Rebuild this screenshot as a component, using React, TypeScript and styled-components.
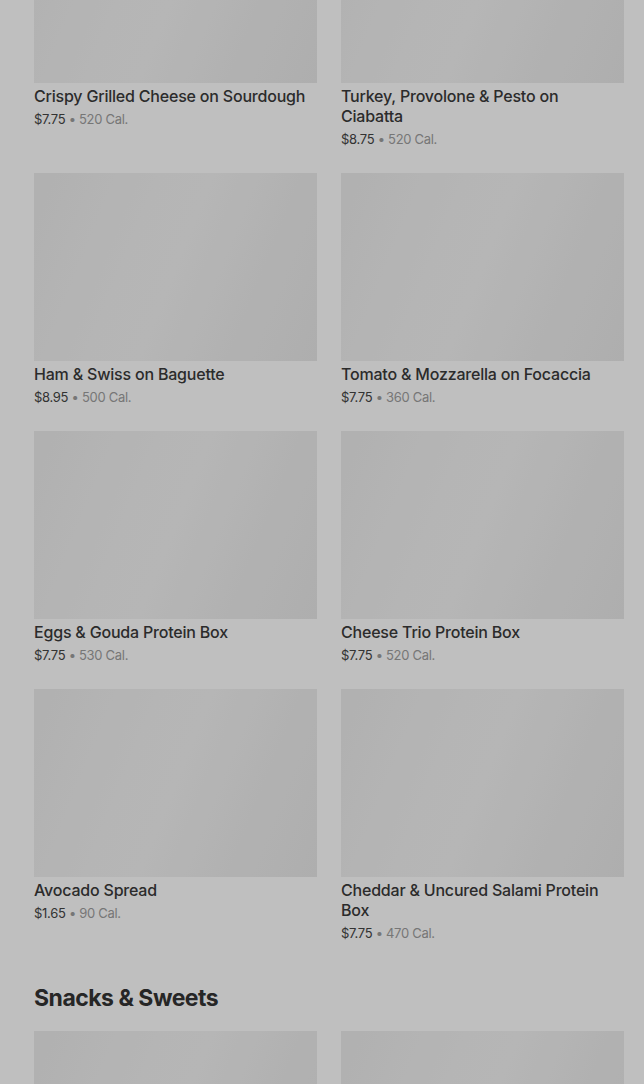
import React from 'react';
import styled, { createGlobalStyle } from 'styled-components';

const GlobalStyle = createGlobalStyle`
  html, body {
    margin: 0;
    padding: 0;
    background: #ffffff;
    font-family: Inter, "Noto Sans", sans-serif;
    overflow: hidden;
  }
`;

const Page = styled.div`
  height: 1084px;
  overflow: hidden;
  padding: 0 20px 0 34px;
  box-sizing: border-box;
`;

const Shift = styled.div`
  margin-top: -105px;
`;

const Grid = styled.div`
  display: grid;
  grid-template-columns: 283px 283px;
  column-gap: 24px;
  row-gap: 24px;
`;

const Card = styled.div`
  display: flex;
  flex-direction: column;
`;

const Thumb = styled.div`
  height: 188px;
  background: linear-gradient(
    112deg,
    #ececec 0%,
    #f2f2f2 35%,
    #f3f3f3 50%,
    #ededed 75%,
    #e9e9e9 100%
  );
`;

const Title = styled.div`
  margin-top: 3px;
  font-size: 16px;
  line-height: 20px;
  font-weight: 500;
  color: #3a3a3a;
  letter-spacing: -0.2px;
`;

const Meta = styled.div`
  margin-top: 3px;
  font-size: 13px;
  line-height: 20px;
  color: #444444;
  letter-spacing: -0.3px;
`;

const Cal = styled.span`
  color: #9e9e9e;
`;

const Heading = styled.h2`
  margin: 41px 0 19px;
  font-size: 23px;
  line-height: 28px;
  font-weight: 700;
  color: #333333;
  letter-spacing: -0.5px;
`;

const Overlay = styled.div`
  position: fixed;
  inset: 0;
  background: rgba(0, 0, 0, 0.25);
`;

interface Item {
  name: string;
  price: string;
  cal: number;
}

const sandwiches: Item[] = [
  { name: 'Crispy Grilled Cheese on Sourdough', price: '$7.75', cal: 520 },
  { name: 'Turkey, Provolone & Pesto on Ciabatta', price: '$8.75', cal: 520 },
  { name: 'Ham & Swiss on Baguette', price: '$8.95', cal: 500 },
  { name: 'Tomato & Mozzarella on Focaccia', price: '$7.75', cal: 360 },
  { name: 'Eggs & Gouda Protein Box', price: '$7.75', cal: 530 },
  { name: 'Cheese Trio Protein Box', price: '$7.75', cal: 520 },
  { name: 'Avocado Spread', price: '$1.65', cal: 90 },
  { name: 'Cheddar & Uncured Salami Protein Box', price: '$7.75', cal: 470 },
];

const snacks: Item[] = [
  { name: '', price: '', cal: 0 },
  { name: '', price: '', cal: 0 },
];

const ItemCard = ({ item }: { item: Item }) => (
  <Card>
    <Thumb />
    {item.name && (
      <>
        <Title>{item.name}</Title>
        <Meta>
          {item.price} <Cal>• {item.cal} Cal.</Cal>
        </Meta>
      </>
    )}
  </Card>
);

const App = () => {
  return (
    <>
      <GlobalStyle />
      <Page>
        <Shift>
          <Grid>
            {sandwiches.map((item) => (
              <ItemCard key={item.name} item={item} />
            ))}
          </Grid>
          <Heading>Snacks &amp; Sweets</Heading>
          <Grid>
            {snacks.map((item, i) => (
              <ItemCard key={i} item={item} />
            ))}
          </Grid>
        </Shift>
      </Page>
      <Overlay />
    </>
  );
};

export default App;
